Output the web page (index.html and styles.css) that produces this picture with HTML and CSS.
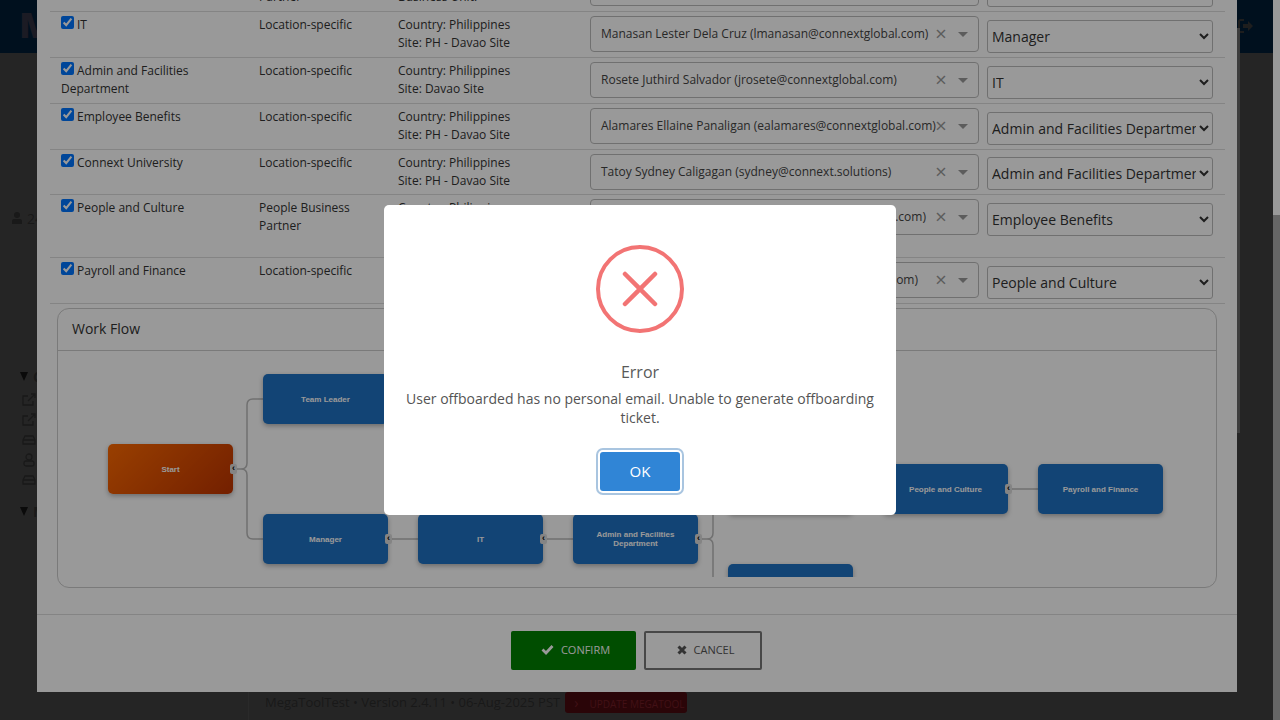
FILE: index.html
```html
<!DOCTYPE html>
<html lang="en">
<head>
  <meta charset="UTF-8">
  <meta name="viewport" content="width=device-width, initial-scale=1.0">
  <title>MegaTool</title>
  <link rel="stylesheet" href="styles.css">
</head>
<body>

  <!-- Page behind the modal -->
  <div class="page">
    <header class="topbar">
      <span class="logo">M</span>
      <svg class="logout" width="16" height="14" viewBox="0 0 16 14">
        <path d="M6 1H2.500Q1 1 1 2.500V11.500Q1 13 2.500 13H6" fill="none" stroke="#333" stroke-width="2"/>
        <path d="M5 5h5V2l5 5-5 5V9H5z" fill="#333"/>
      </svg>
    </header>
    <aside class="side">
      <div class="side-user">
        <svg width="12" height="12" viewBox="0 0 12 12"><circle cx="6" cy="3" r="3" fill="#2a2a2a"/><path d="M1 12V9q0-2 2-2h6q2 0 2 2v3z" fill="#2a2a2a"/></svg>
        <span>24</span>
      </div>
      <div class="side-title"><span class="tri"></span>C</div>
      <ul class="side-list">
        <li><svg width="14" height="14" viewBox="0 0 14 14"><path d="M11 8v4H1V3h5M6 8l7-7M9 1h4v4" fill="none" stroke="#2a2a2a" stroke-width="1.300"/></svg></li>
        <li><svg width="14" height="14" viewBox="0 0 14 14"><path d="M11 8v4H1V3h5M6 8l7-7M9 1h4v4" fill="none" stroke="#2a2a2a" stroke-width="1.300"/></svg></li>
        <li><svg width="14" height="14" viewBox="0 0 14 14"><path d="M3 3h8l2 4v4H1V7zM1 7h12" fill="none" stroke="#2a2a2a" stroke-width="1.300"/></svg></li>
        <li><svg width="14" height="14" viewBox="0 0 14 14"><circle cx="7" cy="4" r="3" fill="none" stroke="#2a2a2a" stroke-width="1.300"/><rect x="2" y="8" width="10" height="5" rx="2" fill="none" stroke="#2a2a2a" stroke-width="1.300"/></svg></li>
        <li><svg width="14" height="14" viewBox="0 0 14 14"><path d="M3 3h8l2 4v4H1V7zM1 7h12" fill="none" stroke="#2a2a2a" stroke-width="1.300"/></svg></li>
      </ul>
      <div class="side-title side-title-2"><span class="tri"></span>M</div>
    </aside>
    <footer class="foot">
      <span>MegaToolTest • Version 2.4.11 • 06-Aug-2025 PST</span>
      <span class="update"><span class="update-arrow">›</span>UPDATE MEGATOOL</span>
    </footer>
    <div class="page-bar"></div>
    <div class="page-scroll"><div class="page-thumb"></div></div>
  </div>

  <!-- Workflow modal -->
  <div class="modal">
    <div class="approvers">

      <div class="row">
        <div class="cell"></div>
        <div class="cell"><br>Partner</div>
        <div class="cell"><br>Business Unit:</div>
        <div class="cell"><div class="sel2"><span class="sel2-text"></span><span class="sel2-x">×</span><span class="sel2-arrow"></span></div></div>
        <div class="cell"><select class="pick"><option></option></select></div>
      </div>

      <div class="row">
        <div class="cell"><input type="checkbox" checked>IT</div>
        <div class="cell">Location-specific</div>
        <div class="cell">Country: Philippines<br>Site: PH - Davao Site</div>
        <div class="cell"><div class="sel2"><span class="sel2-text">Manasan Lester Dela Cruz (lmanasan@connextglobal.com)</span><span class="sel2-x">×</span><span class="sel2-arrow"></span></div></div>
        <div class="cell"><select class="pick"><option>Manager</option></select></div>
      </div>

      <div class="row">
        <div class="cell"><input type="checkbox" checked>Admin and Facilities Department</div>
        <div class="cell">Location-specific</div>
        <div class="cell">Country: Philippines<br>Site: Davao Site</div>
        <div class="cell"><div class="sel2"><span class="sel2-text">Rosete Juthird Salvador (jrosete@connextglobal.com)</span><span class="sel2-x">×</span><span class="sel2-arrow"></span></div></div>
        <div class="cell"><select class="pick"><option>IT</option></select></div>
      </div>

      <div class="row">
        <div class="cell"><input type="checkbox" checked>Employee Benefits</div>
        <div class="cell">Location-specific</div>
        <div class="cell">Country: Philippines<br>Site: PH - Davao Site</div>
        <div class="cell"><div class="sel2"><span class="sel2-text">Alamares Ellaine Panaligan (ealamares@connextglobal.com)</span><span class="sel2-x">×</span><span class="sel2-arrow"></span></div></div>
        <div class="cell"><select class="pick"><option>Admin and Facilities Department</option></select></div>
      </div>

      <div class="row row-short">
        <div class="cell"><input type="checkbox" checked>Connext University</div>
        <div class="cell">Location-specific</div>
        <div class="cell">Country: Philippines<br>Site: PH - Davao Site</div>
        <div class="cell"><div class="sel2"><span class="sel2-text">Tatoy Sydney Caligagan (sydney@connext.solutions)</span><span class="sel2-x">×</span><span class="sel2-arrow"></span></div></div>
        <div class="cell"><select class="pick"><option>Admin and Facilities Department</option></select></div>
      </div>

      <div class="row row-tall">
        <div class="cell"><input type="checkbox" checked>People and Culture</div>
        <div class="cell">People Business Partner</div>
        <div class="cell">Country: Philippines</div>
        <div class="cell"><div class="sel2"><span class="sel2-text sel2-end sel2-end-a">.com)</span><span class="sel2-x">×</span><span class="sel2-arrow"></span></div></div>
        <div class="cell"><select class="pick"><option>Employee Benefits</option></select></div>
      </div>

      <div class="row">
        <div class="cell"><input type="checkbox" checked>Payroll and Finance</div>
        <div class="cell">Location-specific</div>
        <div class="cell"></div>
        <div class="cell"><div class="sel2"><span class="sel2-text sel2-end sel2-end-b">om)</span><span class="sel2-x">×</span><span class="sel2-arrow"></span></div></div>
        <div class="cell"><select class="pick"><option>People and Culture</option></select></div>
      </div>

    </div>

    <div class="card">
      <div class="card-head">Work Flow</div>
      <div class="canvas">
        <svg class="links" width="1158" height="226">
          <path d="M175 118h8q6 0 6-6V54q0-6 6-6h10M175 118h8q6 0 6 6v58q0 6 6 6h10"/>
          <path d="M330 188h30M485 188h30M950 138h30"/>
          <path d="M640 188h9q6 0 6-6v-20M640 188h9q6 0 6 6v32"/>
        </svg>
        <div class="node node-start n-start">Start<i class="port">‹</i></div>
        <div class="node n-team">Team Leader</div>
        <div class="node n-manager">Manager<i class="port">‹</i></div>
        <div class="node n-it">IT<i class="port">‹</i></div>
        <div class="node n-admin">Admin and Facilities<br>Department<i class="port">‹</i></div>
        <div class="node n-benefits"></div>
        <div class="node n-bottom"></div>
        <div class="node n-people">People and Culture<i class="port">‹</i></div>
        <div class="node n-payroll">Payroll and Finance</div>
      </div>
    </div>

    <div class="modal-foot">
      <button class="btn btn-confirm">
        <svg width="13" height="11" viewBox="0 0 13 11"><path d="M1.500 5.500l3.500 3.500 6.500-7" fill="none" stroke="#fff" stroke-width="2.800"/></svg>
        CONFIRM
      </button>
      <button class="btn btn-cancel">
        <svg width="10" height="10" viewBox="0 0 10 10"><path d="M1.500 1.500l7 7M8.500 1.500l-7 7" fill="none" stroke="#555" stroke-width="3"/></svg>
        CANCEL
      </button>
    </div>
  </div>

  <div class="overlay"></div>

  <!-- Error popup -->
  <div class="popup">
    <svg class="popup-icon" width="88" height="88" viewBox="0 0 88 88">
      <circle cx="44" cy="44" r="42" fill="none" stroke="#f27474" stroke-width="4"/>
      <path d="M29 29l30 30M59 29L29 59" fill="none" stroke="#f27474" stroke-width="4.500" stroke-linecap="round"/>
    </svg>
    <h2 class="popup-title">Error</h2>
    <p class="popup-text">User offboarded has no personal email. Unable to generate offboarding ticket.</p>
    <button class="popup-ok">OK</button>
  </div>

</body>
</html>
```

FILE: styles.css
```css
* {
  box-sizing: border-box;
}
html, body {
  margin: 0;
  height: 720px;
  overflow: hidden;
}
body {
  font-family: "Open Sans", "Liberation Sans", sans-serif;
  font-size: 12px;
  color: #333;
  background-color: #3f3f3f;
}

/* page behind the modal */
.page {
  height: 720px;
  position: relative;
}
.topbar {
  height: 53px;
  width: 1273px;
  background-color: #001b33;
  position: relative;
}
.logo {
  position: absolute;
  left: 19px;
  top: 3px;
  font-size: 36px;
  line-height: 44px;
  font-weight: 800;
  color: #2d2d3c;
}
.logout {
  position: absolute;
  left: 1238px;
  top: 19px;
}
.side {
  padding: 158px 0 0 11px;
  color: #2a2a2a;
  font-size: 14px;
}
.side-user {
  display: flex;
  align-items: center;
  gap: 4px;
  height: 14px;
}
.side-title {
  display: flex;
  align-items: center;
  margin: 142px 0 0 9px;
  height: 18px;
  font-weight: 700;
}
.side-title-2 {
  margin-top: 12px;
}
.tri {
  width: 0;
  height: 0;
  border-left: 4.500px solid transparent;
  border-right: 4.500px solid transparent;
  border-top: 9px solid #111;
  margin-right: 5px;
}
.side-list {
  list-style: none;
  margin: 5px 0 0 11px;
  padding: 0;
}
.side-list li {
  height: 20px;
  display: flex;
  align-items: center;
}
.foot {
  position: absolute;
  left: 248px;
  right: 7px;
  top: 692px;
  height: 28px;
  padding-left: 16px;
  border-left: 1px solid #464646;
  display: flex;
  gap: 5px;
  font-size: 13px;
  color: #2a2a2a;
  line-height: 21px;
}
.update {
  flex-shrink: 0;
  width: 122px;
  height: 21px;
  padding-left: 9px;
  background-color: #46090e;
  color: #6e1c24;
  border-radius: 3px;
  font-size: 10px;
  white-space: nowrap;
}
.update-arrow {
  margin-right: 11px;
  font-size: 14px;
}
.page-bar {
  position: absolute;
  left: 1237px;
  top: 28px;
  width: 3px;
  height: 405px;
  background-color: #666;
}
.page-scroll {
  position: absolute;
  right: 0;
  top: 0;
  width: 7px;
  height: 720px;
  background-color: #aaa;
}
.page-thumb {
  height: 215px;
  background-color: #fff;
}

/* modal */
.modal {
  position: absolute;
  left: 37px;
  top: 0;
  width: 1200px;
  height: 692px;
  background-color: #fff;
  overflow: hidden;
}
.approvers {
  margin: -34px 12px 0 13px;
}
.row {
  display: grid;
  grid-template-columns: 198px 139px 192px 397px 226px;
  height: 46px;
  padding: 4px 0 0 11px;
  border-bottom: 1px solid #ddd;
  line-height: 18px;
}
.row-short {
  height: 45px;
}
.row-tall {
  height: 63px;
}
.cell:nth-child(2) {
  padding-right: 20px;
}
.cell input {
  margin: 0 3px 0 0;
  width: 13px;
  height: 13px;
}
.sel2 {
  display: flex;
  align-items: center;
  width: 389px;
  height: 36px;
  padding: 0 10px;
  border: 1px solid #bbb;
  border-radius: 4px;
}
.sel2-text {
  flex: 1;
  white-space: nowrap;
  color: #444;
}
.sel2-end {
  text-align: right;
}
.sel2-end-a {
  padding-right: 17px;
}
.sel2-end-b {
  padding-right: 25px;
}
.sel2-x {
  width: 12px;
  margin-left: -8px;
  text-align: center;
  font-size: 20px;
  line-height: 18px;
  color: #999;
}
.sel2-arrow {
  width: 0;
  height: 0;
  margin-left: 11px;
  border-left: 5px solid transparent;
  border-right: 5px solid transparent;
  border-top: 5px solid #999;
}
.pick {
  display: block;
  width: 226px;
  height: 33px;
  margin-top: 4px;
  padding: 0;
  font-family: inherit;
  font-size: 14px;
  color: #333;
  background-color: #fff;
  border: 1px solid #bbb;
  border-radius: 3px;
}
.row-short .pick {
  margin-top: 3px;
}

/* work flow card */
.card {
  margin: 4px 20px 0;
  height: 280px;
  border: 1px solid #ccc;
  border-radius: 12px;
}
.card-head {
  height: 42px;
  padding-left: 14px;
  border-bottom: 1px solid #ccc;
  font-size: 14px;
  line-height: 39px;
}
.canvas {
  position: relative;
  height: 226px;
  overflow: hidden;
}
.links {
  position: absolute;
  left: 0;
  top: 0;
}
.links path {
  fill: none;
  stroke: #bbb;
  stroke-width: 1.500;
}
.node {
  position: absolute;
  width: 125px;
  height: 50px;
  display: flex;
  align-items: center;
  justify-content: center;
  text-align: center;
  background-color: #1f72c3;
  border-radius: 5px;
  box-shadow: 0 2px 5px rgba(0, 0, 0, 0.3);
  font-family: "Liberation Sans", Arial, sans-serif;
  font-size: 8px;
  line-height: 9px;
  font-weight: 700;
  color: #fff;
}
.node-start {
  background: linear-gradient(135deg, #ff6a00, #c03500);
}
.port {
  position: absolute;
  right: -4px;
  top: 20px;
  width: 7px;
  height: 10px;
  border-radius: 2px;
  background-color: #ddd;
  color: #000;
  font-style: normal;
  font-size: 9px;
  line-height: 9px;
}
.n-start { left: 50px; top: 93px; }
.n-team { left: 205px; top: 23px; }
.n-manager { left: 205px; top: 163px; }
.n-it { left: 360px; top: 163px; }
.n-admin { left: 515px; top: 163px; }
.n-benefits { left: 670px; top: 113px; }
.n-bottom { left: 670px; top: 213px; }
.n-people { left: 825px; top: 113px; }
.n-payroll { left: 980px; top: 113px; }

.modal-foot {
  display: flex;
  justify-content: center;
  gap: 8px;
  margin-top: 26px;
  padding: 16px 2px 0 0;
  border-top: 1px solid #ddd;
}
.btn {
  display: flex;
  align-items: center;
  justify-content: center;
  gap: 7px;
  height: 39px;
  padding: 0 0 2px;
  border-radius: 2px;
  font-family: inherit;
  font-size: 11px;
}
.btn-confirm {
  width: 125px;
  padding-left: 5px;
  background-color: #008000;
  color: #fff;
  border: none;
}
.btn-cancel {
  width: 118px;
  padding-left: 6px;
  background-color: #fff;
  color: #555;
  border: 2px solid #777;
}

.overlay {
  position: fixed;
  left: 0;
  top: 0;
  width: 1280px;
  height: 720px;
  background-color: rgba(0, 0, 0, 0.4);
}

/* error popup */
.popup {
  position: absolute;
  left: 384px;
  top: 205px;
  width: 512px;
  height: 310px;
  padding-top: 40px;
  background-color: #fff;
  border-radius: 5px;
  text-align: center;
}
.popup-icon {
  display: block;
  margin: 0 auto;
}
.popup-title {
  margin: 27px 0 0;
  font-size: 16px;
  line-height: 24px;
  font-weight: 400;
  color: #595959;
}
.popup-text {
  margin: 5px 20px 0;
  font-size: 14px;
  line-height: 19px;
  color: #545454;
}
.popup-ok {
  width: 80px;
  height: 39px;
  margin-top: 25px;
  padding: 0 0 2px;
  border: none;
  border-radius: 3px;
  background-color: #3085d6;
  color: #fff;
  font-family: inherit;
  font-size: 15px;
  box-shadow: 0 0 0 2px #fff, 0 0 0 4px #a9c5e0;
}
```
